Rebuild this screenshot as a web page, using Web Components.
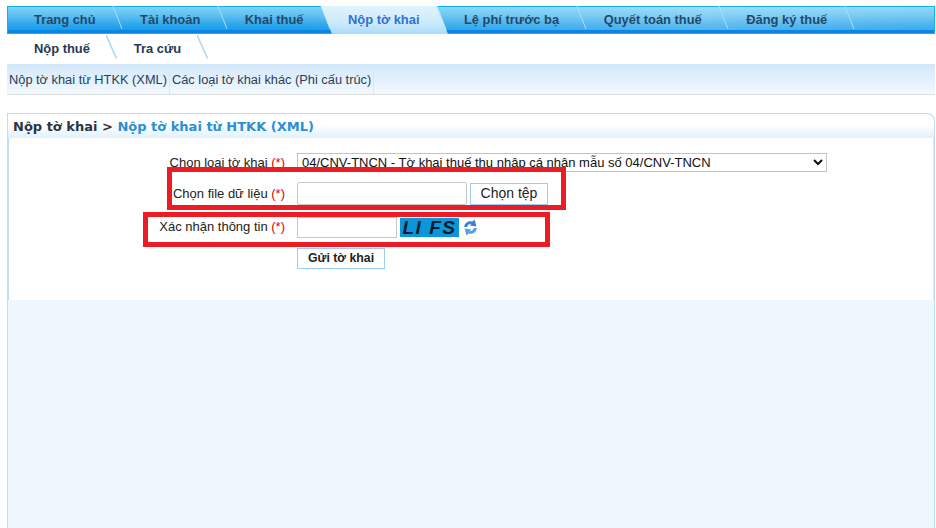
<!DOCTYPE html>
<html lang="vi"><head><meta charset="utf-8"><title>Nộp tờ khai</title>
<style>
html,body{margin:0;height:100%;background:#fff;overflow:hidden}
body{font-family:"Liberation Sans",Arial,sans-serif;font-size:14px;color:#222}
</style></head><body>
<template id="t-page"><style>
:host{display:flex;flex-direction:column;height:528px;position:relative;padding:6px 1px 0 7px;box-sizing:border-box}
.mark{position:absolute;border:5px solid #ed1c24;box-sizing:border-box;pointer-events:none}
.m1{left:167px;top:167px;width:399px;height:43px}
.m2{left:143px;top:212px;width:407px;height:35px}
</style>
<tax-nav>
<tax-tab>Trang chủ</tax-tab><tax-tab>Tài khoản</tax-tab><tax-tab>Khai thuế</tax-tab><tax-tab active>Nộp tờ khai</tax-tab><tax-tab>Lệ phí trước bạ</tax-tab><tax-tab>Quyết toán thuế</tax-tab><tax-tab>Đăng ký thuế</tax-tab>
</tax-nav>
<tax-subnav><tax-subitem>Nộp thuế</tax-subitem><tax-subitem>Tra cứu</tax-subitem></tax-subnav>
<tax-strip><tax-stab>Nộp tờ khai từ HTKK (XML)</tax-stab><tax-stab>Các loại tờ khai khác (Phi cấu trúc)</tax-stab></tax-strip>
<tax-panel><span slot="a">Nộp tờ khai &gt;</span><span slot="b">Nộp tờ khai từ HTKK (XML)</span><tax-form></tax-form></tax-panel>
<div class="mark m1"></div><div class="mark m2"></div>
</template>

<template id="t-nav"><style>
:host{display:flex;flex:none;height:28px;box-sizing:border-box;border:1px solid #12aef2;position:relative;
background:
 linear-gradient(#0a86e4,#0a86e4) left 0 bottom 0/100% 3px no-repeat,
 linear-gradient(90deg,rgba(255,255,255,0) 30%,rgba(255,255,255,.25) 75%,rgba(255,255,255,.15) 100%),
 linear-gradient(#7dd2f7 0%,#62c1f2 30%,#2aa5ea 70%,#0e95e4 100%)}
</style><slot></slot></template>

<template id="t-tab"><style>
:host{display:block;position:relative;padding:0 17.5px 0 27px;margin-top:-1px;height:26px;font:bold 12.9px/28px "Liberation Sans",Arial,sans-serif;color:#22496a;white-space:nowrap}
:host(:first-child){padding-left:26px}
svg{position:absolute;right:-10px;top:0;width:10px;height:24px;overflow:visible}
.bg{display:none;position:absolute;left:0;right:-11px;top:0;height:28px;background:linear-gradient(#dff4fe,#cdeafb 60%,#a8dcf8);clip-path:polygon(0 0,calc(100% - 11px) 0,100% 100%,11px 100%)}
:host([active]) .bg{display:block}
:host([active]){color:#2f6fd6}
span{position:relative}
</style><div class="bg"></div><span><slot></slot></span>
<svg viewBox="0 0 10 24"><path d="M0 0L9 23" stroke="#a9e0f8" stroke-width="1" fill="none"/></svg></template>

<template id="t-subnav"><style>
:host{display:flex;flex:none;height:30px;box-sizing:border-box;padding-top:1px}
</style><slot></slot></template>

<template id="t-subitem"><style>
:host{display:block;position:relative;padding:0 16px 0 27px;font:bold 12.9px/28px "Liberation Sans",Arial,sans-serif;color:#1f3a55;white-space:nowrap;height:25px}
:host(:nth-child(2)){padding-left:28px}
svg{position:absolute;right:-11px;top:0;width:11px;height:24px}
</style><slot></slot><svg viewBox="0 0 11 24"><path d="M0 0L10.5 23.5" stroke="#a4d8f5" stroke-width="1.5" fill="none"/></svg></template>

<template id="t-strip"><style>
:host{display:flex;flex:none;height:31px;box-sizing:border-box;border-top:1px solid #cfe5f8;border-bottom:1px solid #dddddd;background:linear-gradient(#d4e8fa,#f2f9ff)}
</style><slot></slot></template>

<template id="t-stab"><style>
:host{display:block;padding:0 2px;font:12.82px/30px "Liberation Sans",Arial,sans-serif;color:#2b3f55;border-right:1px solid #d5e8f9;white-space:nowrap}
</style><slot></slot></template>

<template id="t-panel"><style>
:host{display:flex;flex-direction:column;flex:1;margin-top:18px;box-sizing:border-box;border:1px solid #bcdcf8;border-bottom:0;border-top-right-radius:8px;background:#eef7fe}
.hd{height:24px;padding-left:5px;font:bold 13px/25px "DejaVu Sans",Verdana,sans-serif;background:linear-gradient(#fff 45%,#e0f0fd);color:#2b3440;white-space:nowrap;border-top-right-radius:8px}
.hd ::slotted([slot=b]){color:#2a8fd6}
.bd{height:162px;background:#fff;border-left:1px solid #bcdcf8;border-right:1px solid #d5e9fb}
</style><div class="hd"><slot name="a"></slot> <slot name="b"></slot></div><div class="bd"><slot></slot></div></template>

<template id="t-form"><style>
:host{display:grid;grid-template-columns:276px 530px;column-gap:12px;align-content:start;padding-top:15px;font:14px "Liberation Sans",Arial,sans-serif;color:#222}
label{justify-self:end;white-space:nowrap;font-size:13px}
label b{font-weight:400;color:#e00000}
.l1{line-height:19px}
.l2{line-height:23px;margin-top:10px}
.l3{line-height:19px;margin-top:12px}
select{width:530px;height:19px;margin:0;padding:0;font:13px "Liberation Sans",Arial,sans-serif;color:#111;background:#fff;border:1px solid #c4c4c4;box-sizing:border-box}
.r{display:flex;align-items:center;gap:3px}
.r2{margin-top:10px;height:23px}
.r3{margin-top:12px;height:21px}
input{box-sizing:border-box;margin:0;background:#fff;border:1px solid #c8c8c8;border-radius:2px;padding:0}
.i2{width:170px;height:23px}
.i3{width:100px;height:21px;border-radius:0}
button{box-sizing:border-box;background:#fff;border:1px solid #9bcdf5;margin:0;padding:0 0 2px;color:#222;font-family:"Liberation Sans",Arial,sans-serif}
.b2{width:78px;height:22px;font-size:14px}
.b3{width:88px;height:21px;margin-top:10px;font-size:12.3px;font-weight:700;grid-column:2;justify-self:start}
.cap{width:59px;height:19px;background:#0a96da;color:#0b1a2c;font:italic bold 19px/19px "Liberation Sans",sans-serif;text-align:center;white-space:nowrap;letter-spacing:1.5px;overflow:hidden}
svg{width:15px;height:17px;margin-left:1px}
</style>
<label class="l1">Chọn loại tờ khai <b>(*)</b></label>
<select><option>04/CNV-TNCN - Tờ khai thuế thu nhập cá nhân mẫu số 04/CNV-TNCN</option></select>
<label class="l2">Chọn file dữ liệu <b>(*)</b></label>
<div class="r r2"><input class="i2" aria-label="file"><button class="b2">Chọn tệp</button></div>
<label class="l3">Xác nhận thông tin <b>(*)</b></label>
<div class="r r3"><input class="i3" aria-label="captcha"><div class="cap">LI FS</div>
<svg viewBox="0 0 15 17"><path d="M1.2 8C1.4 4 5.6 1 9.4 2.6L11.6.6 13.4 7.4 6.6 6.4 8.6 4.8C6.6 4.6 4.6 5.8 4.2 8Z" fill="#3a80d6"/><path d="M13.8 9C13.6 13 9.4 16 5.6 14.4L3.4 16.4 1.6 9.6 8.4 10.6 6.4 12.2C8.4 12.4 10.4 11.2 10.8 9Z" fill="#5a9fe6"/></svg></div>
<button class="b3">Gửi tờ khai</button>
</template>

<script>
const def=(n,t)=>customElements.define(n,class extends HTMLElement{constructor(){super();this.attachShadow({mode:'open'}).appendChild(document.getElementById(t).content.cloneNode(true));}});
[['tax-nav','t-nav'],['tax-tab','t-tab'],['tax-subnav','t-subnav'],['tax-subitem','t-subitem'],['tax-strip','t-strip'],['tax-stab','t-stab'],['tax-panel','t-panel'],['tax-form','t-form'],['tax-page','t-page']].forEach(a=>def(a[0],a[1]));
</script>
<tax-page></tax-page>
</body></html>
